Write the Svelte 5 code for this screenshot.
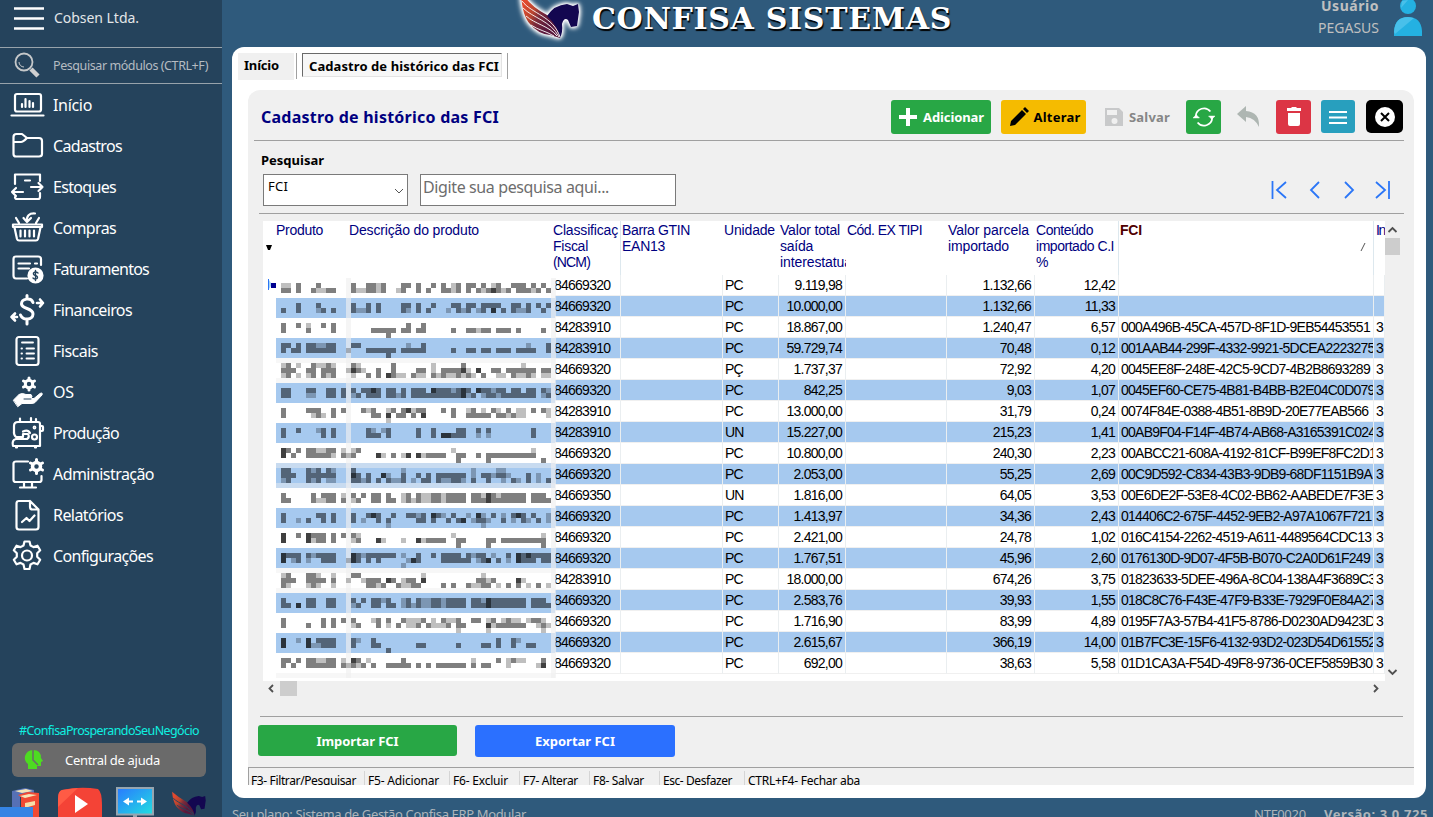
<script>
  // Tightens or widens letter-spacing so that a label fills its given width.
  function fit(node, width) {
    const n = node.textContent.length;
    const w = node.getBoundingClientRect().width;
    node.style.letterSpacing = (width - w) / n + 'px';
  }

  const menu = [
    ['Início', 39, 'home'], ['Cadastros', 69, 'folder'], ['Estoques', 63, 'stock'], ['Compras', 63, 'basket'],
    ['Faturamentos', 96, 'bill'], ['Financeiros', 79, 'money'], ['Fiscais', 45, 'doc'], ['OS', 21, 'hand'],
    ['Produção', 66, 'sew'], ['Administração', 101, 'admin'], ['Relatórios', 70, 'report'], ['Configurações', 100, 'gear']
  ];

  const heads = [
    { l: [] }, { l: [['Produto', 47]] }, { l: [['Descrição do produto', 130]] },
    { l: [['Classificaç', 65], ['Fiscal', 35], ['(NCM)', 37]] },
    { l: [['Barra GTIN', 68], ['EAN13', 43]] }, { l: [['Unidade', 51]] },
    { l: [['Valor total', 60], ['saída', 33], ['interestatual', 75]] }, { l: [['Cód. EX TIPI', 75]] },
    { l: [['Valor parcela', 81], ['importado', 61]] }, { l: [['Conteúdo', 57], ['importado C.I', 78], ['%', 11]] },
    { l: [['FCI', 22]], b: true }, { l: [['In', 9]] }
  ];

  const rows = `84669320|PC|9.119,98|1.132,66|12,42|
84669320|PC|10.000,00|1.132,66|11,33|
84283910|PC|18.867,00|1.240,47|6,57|000A496B-45CA-457D-8F1D-9EB54453551
84283910|PC|59.729,74|70,48|0,12|001AAB44-299F-4332-9921-5DCEA2223275
84669320|PÇ|1.737,37|72,92|4,20|0045EE8F-248E-42C5-9CD7-4B2B8693289
84669320|PC|842,25|9,03|1,07|0045EF60-CE75-4B81-B4BB-B2E04C0D079
84283910|PC|13.000,00|31,79|0,24|0074F84E-0388-4B51-8B9D-20E77EAB566
84283910|UN|15.227,00|215,23|1,41|00AB9F04-F14F-4B74-AB68-A3165391C024
84669320|PC|10.800,00|240,30|2,23|00ABCC21-608A-4192-81CF-B99EF8FC2D1
84669320|PC|2.053,00|55,25|2,69|00C9D592-C834-43B3-9DB9-68DF1151B9A
84669350|UN|1.816,00|64,05|3,53|00E6DE2F-53E8-4C02-BB62-AABEDE7F3E
84669320|PC|1.413,97|34,36|2,43|014406C2-675F-4452-9EB2-A97A1067F721
84669320|PC|2.421,00|24,78|1,02|016C4154-2262-4519-A611-4489564CDC13
84669320|PC|1.767,51|45,96|2,60|0176130D-9D07-4F5B-B070-C2A0D61F249
84283910|PC|18.000,00|674,26|3,75|01823633-5DEE-496A-8C04-138A4F3689C3
84669320|PC|2.583,76|39,93|1,55|018C8C76-F43E-47F9-B33E-7929F0E84A27
84669320|PC|1.716,90|83,99|4,89|0195F7A3-57B4-41F5-8786-D0230AD9423D
84669320|PC|2.615,67|366,19|14,00|01B7FC3E-15F6-4132-93D2-023D54D61552
84669320|PC|692,00|38,63|5,58|01D1CA3A-F54D-49F8-9736-0CEF5859B30`.split('\n').map((r) => r.split('|'));

  // Masked cells: y of each line, then runs of start column, shade and length on a 5px grid.
  const mask = `283 1l2 4m1 8m1 15m1 18m2 20l1 21m1 25m2 28m1 31m1 33m1 35l1 36m1 38m2 41m1 43l1 44m1 47m2 49m1 51m1 53m1
288 1m2 4m1 7m1 8l2 10m2 15m1 16l2 18m2 20l1 21m1 24l1 25m1 28m1 30m1 33m2 35l1 36m1 38m1 40m1 41l1 42m1 43d1 44m1 45l1 46m1 48m1 49m2 51l1 52m1 54m1
303 4m1 8m1 15m1 18m1 20m1 25m2 28m1 31m1 35m2 38m2 41m4 47m2 50m1 52m1 54m1
308 1m1 4m1 8l1 9m1 11m1 15m1 16l2 18m1 20m1 25m1 26l1 28m1 30m1 34l1 36m1 37l1 38m1 40l1 41m1 43d1 45m1 47m1 48l2 50m1 53m1
323 1m1 4m1 6l1 9m1 11m1 26m1 29m1
328 1m1 6m1 11m1 19m5 25m2 28m2 35m1 38m2 40l1 41m2 44m3 48m1 53m1
333 22m1
343 1m2 4m1 6m2 8l2 10m2 15m2 26l1 29m1 50l1 54m1
348 1m1 3m2 6m6 14l1 18m6 25m5 35m1 38m2 41m2 44m3 48m4 54m1
353 22m1
363 1l1 2m1 4l1 7m1 8l2 10m1 11l1 15m1 16l1 23m1 31l1 37m1 49l1
368 1m3 6m2 9m2 11m1 14l1 15d1 16m1 17l1 20m1 23m1 28m2 31l1 33m4 37d1 38l1 40d1 43m2 46m2 48m4 53m2
373 1l1 2m1 4l1 6l1 7m1 9m1 10l1 11m1 15l1 18m1 20m1 22d1 23m1 24l2 27m1 28l2 31m1 32l1 33m1 34l2 36m1 37l1 38m1 39l1 41m1 44l2 47m1 48l2 50m1 51l1 53l2
388 1m2 6m2 10m2 13m1 15m1 17m2 19d1 20m1 22m2 25m1 27m3 31d1 32m3 35l1 36m1 37d1 38m1 40d1 41m2 43l1 44m2 47m2 50m2 53m1 54l1
393 1m2 6l2 10m2 13m1 15l1 16m1 18m2 20m1 22m2 24l1 25m1 27m4 31m4 35m2 37d1 38l1 39m1 41l1 42m2 44l1 45m1 46m6 53l1 54m1
408 1m1 6m3 11m1 13m1 17m1 18l1 19m1 22l1 23m1 25m1 26d1 27l1 28m2 33m1 35m1 38l1 39m1 41l1 43m1 44l1 46m1 48l2 51m1 53m1 54l1
413 1m1 7l1 8m1 9l1 11m1 19m2 22d1 24m2 27m1 29d1 35m1 38m5 44m2 46l1 47m1 48l2 54l1
418 22l1
428 1m1 4m1 8l1 9m1 11m1 18m1 19l1 21l1 22m1 28m1 31m1 36m2 40m1 42m1 51m1
433 1m1 9m1 11m1 18m3 22m1 28m1 31m1 33d2 35m2 37m1 40l1 42l1 51m1
448 1d1 2m1 4m1 6m2 8l2 10m2 13l1 15l1 16m1 35l1 51l1
453 1d1 3m1 6m2 8m2 10m1 11l1 13m1 14l1 15m1 20d1 21l1 23m1 25l1 26d1 28d1 29l1 30m4 36m2 40m1 42m10
458 36m1 42m1 53m1
468 1m2 6m1 7l1 8m1 10m1 11l1 15m1 25l1 39l1 44l2
473 1m3 6m6 15d1 16m1 18m1 21d1 22l1 25m1 28m1 30m1 32m6 39l1 41m2 43l1 44m2 46l1 50m1 52l1
478 1l1 2m1 6m1 7l1 8m1 10l2 15m2 17l1 18m1 20m1 22m1 23l2 25m1 27l1 29m2 32m1 33l2 35m2 37l1 39m1 42m1 45l1 47m1 48l1 50m1 52l1 54m1
493 1m1 7m1 9m3 13l1 15m1 17m1 19m2 22m1 25l1 26m1 28m1 29l2 31m2 33l1 34m4 39m2 41l1 42d1 43m1 44l1 45m5 51m3
498 1m2 7m1 8l2 10m2 13m1 15l1 16m1 19m2 22m2 25l1 26m1 27l1 28m1 29l2 31m2 33l1 34m4 39m2 41m1 42d1 43m1 44m6 51m4
513 1m1 8m2 11m1 15m1 18m1 19d1 20m1 23m1 26m2 28l1 29m1 31d1 32m1 33l1 35m1 38l1 40d1 41l1 43m1 45l1 47m1 48d1 49m1 51m1 54l1
518 1m1 4l1 6m1 9m1 11m1 15m1 17l1 20m1 22m1 28m2 31m1 34m1 36m1 37d1 39l1 40m2 42l1 45m1 47l1 49m1 50l1 52m1 54l1
523 22l1 41l1
533 1d1 4m1 6d1 7m2 9m1 11m1 13m1 15m1 16l1 35l1 53l1
538 1d1 6d1 7l1 8m2 11m1 15l1 16m1 20d1 21l1 25l1 28d1 29l1 30m4 36m2 42m2 45m5 50m4
543 36m1 42m1 53m1
553 1d1 2m2 4m1 6m1 7l1 8m4 15d1 16m1 17l1 18m2 20m4 25l1 28m1 31m1 33m2 35m2 38m1 39l1 40m2 43l1 46m1 48d1 49m1 50d1 51m4
558 1d1 3l1 4m1 6l1 9m3 14l1 15d1 16m1 18m1 20m1 26l1 27d1 28m1 33m4 37m2 40l1 41m1 42d1 44m1 46l1 48d1 49m3 53m2
563 25l1
573 1l1 2m1 6m1 7m1 8l1 11l1 15m2 29l1 41l1
578 1m3 6m4 11m1 14l1 17l1 18m3 22d1 23m1 25l1 26m2 29d1 40m2 42l1 43m1 48d1 49l1
583 1m1 2l1 6l1 7m1 8l1 11l1 18m2 20l1 21m1 24m1 25l2 27m2 33m1 35m1 38m1 39l2 41m2 44l1 46m1 48m1 50l1 52m1 54l1
598 1m1 6m2 10m2 15m1 17m1 19m2 21l1 22m1 25l1 26m1 28m1 29l2 31m2 33l1 34m4 39m2 41l1 42d1 43m1 44m6 51m3
603 1m2 4d1 6m2 10m2 15l1 16m1 19m2 22m2 25l1 26m1 27l1 28m1 29l2 31m2 33l1 34m4 39m2 41m1 42d1 43m1 44m6 51m4
618 1m1 9m1 11m1 13m1 15m1 19l1 20m1 22m1 25m1 26l3 29m1 31l1 33m1 34l2 36m1 39m2 42l1 43m1 45l1 46m1 47l2 50l1 51m2 53l1
623 1m1 6m1 9m1 11m1 15l1 16m1 20m1 22l1 24m1 26l2 28m1 30m1 31l2 33l1 34m1 36m2 42d1 43l1 44m6 53m1 52l1 54l1
628 36l1 42l1 53l1
638 1d1 4l1 6d1 8m3 11m1 15m1 16l1 19m1 44m1 47m1 48l1
643 1d1 6d1 7l2 9m3 15m1 19m2 28m2 36m1 41m2 44m1 47m1 50m2
648 22m1
658 1m2 4m1 6m2 8l2 10m2 13l1 15d1 16m1 18l1 25m1 39l1 44m1 46l1 47m1 48l2 53m1
663 1m1 3m1 6m4 10m2 13m1 14l1 15m1 16l1 17m1 19m1 22m2 24m3 28m1 30m1 32m6 39m1 41m2 46l1 52l1 53d1`
    .split('\n').flatMap((line) => {
      const [y, ...runs] = line.split(' ');
      return runs.map((r) => {
        const [, s, k, n] = r.match(/(\d+)([lmd])(\d+)/);
        return { x: s * 5, y: y - 275, w: n * 5, o: { l: 0.25, m: 0.5, d: 0.75 }[k] };
      });
    });
  const stripes = [[298, 20], [338, 20], [383, 20], [423, 20], [468, 15], [508, 20], [548, 20], [593, 20], [633, 20]];
  const pale = [[358, 5, '#f7f7f7'], [378, 5, '#f7f7f7'], [463, 5, '#c8dbf0'], [483, 5, '#c8dbf0'], [568, 5, '#f7f7f7'], [588, 5, '#f7f7f7'], [673, 5, '#f7f7f7']];

  const keys = [['F3- Filtrar/Pesquisar', 105, 116], ['F5- Adicionar', 71, 85], ['F6- Excluir', 55, 70], ['F7- Alterar', 55, 70], ['F8- Salvar', 51, 70], ['Esc- Desfazer', 69, 85], ['CTRL+F4- Fechar aba', 112, 130]];
</script>

{#snippet pegasus()}
  <defs><linearGradient id="wing" x1="0" y1="0" x2="1" y2=".6"><stop offset=".15" stop-color="#e2492f" /><stop offset=".4" stop-color="#b8452f" /><stop offset=".55" stop-color="#7d2c3a" /><stop offset=".8" stop-color="#5a183c" /></linearGradient></defs>
  <path d="M1-4C2 10 5 20 10 25Q18 35 30 36L40 39Q40 25 27 16 12 8 5-2z" fill="url(#wing)" />
  <path d="M27 17Q34 6 47 5L53 7 58 5 59 13 57 27 51 28 48 21Q44 18 42 25 43 33 40 39 38 27 27 17z" fill="#130750" />
  <path d="M2 2C12 15 33 17 40 38M3 9C13 19 31 22 39 38M6 17C15 25 29 27 37 37M11 26C18 31 26 32 34 37" fill="none" stroke="#fff" stroke-width=".9" />
{/snippet}

<div class="app">
  <aside>
    <div class="company">
      <svg width="32" height="28" viewBox="0 0 32 28"><path d="M1 3.500H31M1 13.500H31M1 23.500H31" stroke="#fff" stroke-width="2.400" /></svg>
      <span use:fit={85}>Cobsen Ltda.</span>
    </div>
    <div class="find">
      <svg width="26" height="26" viewBox="0 0 26 26" fill="none"><circle cx="10" cy="10" r="8.500" stroke="#c5c8ca" stroke-width="1.800" /><path d="M5 10a5 5 0 0 0 5 5" stroke="#c5c8ca" /><path d="M17 17l7 7" stroke="#d0d0d0" stroke-width="4.500" /></svg>
      <span use:fit={155}>Pesquisar módulos (CTRL+F)</span>
    </div>
    <nav>
      {#each menu as [label, w, icon]}
        <div class="item">
          <svg class="mi" width="36" height="36" viewBox="0 0 36 36" fill="none" stroke="#fff" stroke-width="2.200" stroke-linecap="round" stroke-linejoin="round">
            {#if icon === 'home'}
              <rect x="6" y="7" width="26" height="17.500" rx="2" /><path d="M2.500 28.500H34.500" /><path d="M13 20v-3M16.500 20v-8M20.500 20v-6M24 20v-4" />
            {:else if icon === 'folder'}
              <path d="M4.500 26V9Q4.500 6 7.500 6H13L18 10H30Q33 10 33 13V26Q33 28.500 30 28.500H7Q4.500 28.500 4.500 26M4.500 14H12Q14 14 18 10" />
            {:else if icon === 'stock'}
              <path d="M6 15V5.500H31V12M31 24V28Q31 30 29 30H8Q6 30 6 28M16 11.500H21M22 18H33.500M29.500 14l4 4-4 4M14 23H3M7 19l-4 4 4 4" />
            {:else if icon === 'basket'}
              <path d="M4 14.500H33V17H4zM5.500 17.500L8 29Q8.500 30.500 10 30.500H27Q28.500 30.500 29 29L31.500 17.500M11.500 20.500v6M16 20.500v6M20.500 20.500v6M25 20.500v6M10 13L7 8M27 13l3-5M18 11C17.500 6 20 3 26 3.500M14.500 8l3.500 4 4-4" />
            {:else if icon === 'bill'}
              <path d="M18 27.500H7Q4.500 27.500 4.500 24.500V8Q4.500 5.500 7 5.500H29Q32 5.500 32 8V14M9.500 12.500H21M9.500 17.500H20M26 12.500h2" /><circle cx="26.500" cy="24.500" r="7" fill="#fff" /><path d="M29 22Q26.500 20 24.500 22 24 24 26.500 24.500 29.500 25.500 28 27.500 26 29 24 27M26.500 19.500v10" stroke="#25435c" stroke-width="1.400" />
            {:else if icon === 'money'}
              <path d="M24 10.500C22 5 12.500 6.500 12.500 12 13 17.500 24 15.500 24 22 24 28 14 29 11.500 23M18 3.500V7M18 28v4" stroke-width="3" /><path d="M28 11H34M31 7.500l3 3.500-3 3.500M8 25H2.500M6 21.500l-3.500 3.500 3.500 3.500" stroke-width="2.600" />
            {:else if icon === 'doc'}
              <rect x="7.500" y="4" width="22" height="28" rx="2.500" /><path d="M13 9.500H24M17.500 15.500H25M17.500 20.500H25M17.500 25.500H25M12.500 15.500h.5M12.500 20.500h.5M12.500 25.500h.5" stroke-width="1.900" />
            {:else if icon === 'hand'}
              <circle cx="20" cy="10" r="3.700" stroke-width="3" /><path d="M20 4v2M20 14v2M14.500 7l2 1M23.500 12l2 1M14.500 13l2-1M23.500 8l2-1" stroke-width="3" /><path d="M4.500 26L10 20.500Q13 18.500 17 20.500H22Q24 22 22 24.500H25L31 19.500Q34 18 33 21L26 28.500Q25 29.500 22 29.500H13L9 32.500z" fill="#fff" stroke-width="1" /><path d="M15 25H22" stroke="#25435c" stroke-width="1" />
            {:else if icon === 'sew'}
              <path d="M5 16V11Q5 7 9 7H29Q31 7 31 9V31H4Q2.500 25 7 24H18Q21 22 19 19H14V22H7Q4.500 20 5 16M31 11h2q1 0 1 1v3q0 1-1 1h-2M11 6V3.500M22 6V3M27 6V4M14 16.500Q19 14 21 18M7 32.500h1M26 32.500h1" /><circle cx="25.500" cy="12.500" r=".8" /><circle cx="25.500" cy="22" r="2.500" />
            {:else if icon === 'admin'}
              <path d="M19 5.500H7Q4.500 5.500 4.500 7.500V24Q4.500 26 7 26H30Q32.500 26 32.500 24V20M15 26.500v4.500M23 26.500v4.500M11 31.500H27" /><g transform="translate(27.500 10.500)"><circle r="4" stroke-width="3.500" /><path d="M0-7v2M0 5v2M-6-3.500l2 1M4 2.500l2 1M-6 3.500l2-1M4-2.500l2-1" stroke-width="3" /></g>
            {:else if icon === 'report'}
              <path d="M21 4H10Q7.500 4 7.500 6.500V30Q7.500 32.500 10 32.500H27Q29.500 32.500 29.500 30V12.500L21 4V10Q21 12.500 23.500 12.500H29M13 25l4.500-4 3 3 5-5.500" />
            {:else}
              <path d="M15.500 3.500h5l1 4 3 1.600 4-1.400 2.700 4.500-3 3v3.600l3 3-2.700 4.500-4-1.400-3 1.600-1 4.500h-5l-1-4.500-3-1.600-4 1.400-2.700-4.500 3-3v-3.600l-3-3 2.700-4.500 4 1.400 3-1.600z" /><circle cx="18" cy="17.500" r="5" />
            {/if}
          </svg>
          <span use:fit={w}>{label}</span>
        </div>
      {/each}
    </nav>
    <div class="tag"><span use:fit={180}>#ConfisaProsperandoSeuNegócio</span></div>
    <div class="help">
      <svg width="20" height="22" viewBox="0 0 20 22"><path d="M4 20V15Q0 12 1 7 3 1 9 1 17 1 17 9L19 12 17 13V17H13V20z" fill="#4ddb21" /><path d="M9 1V11L14 16" fill="none" stroke="#6a6a6a" stroke-width="1.500" /></svg>
      <span use:fit={95}>Central de ajuda</span>
    </div>
    <div class="dock">
      <svg width="222" height="30" viewBox="0 0 222 30">
        <path d="M12 4L25 1 34 3V10H20V26H12z" fill="#5670b5" /><path d="M15 4L26 2 33 4 22 6z" fill="#f5e6b8" />
        <path d="M18 8L28 5 39 6V30H21V10z" fill="#f04a33" /><path d="M20 9L29 7 37 8 25 11z" fill="#f5e6b8" /><path d="M25 16L35 14V18L28 20V22H25z" fill="#f5dfa8" />
        <rect y="20" width="33" height="10" fill="#3584e4" />
        <path d="M62 3Q80-1 98 2 102 5 102 18V30H58V12Q58 4 62 3z" fill="#f44336" /><path d="M62 3L78 1 58 20V12Q58 4 62 3z" fill="#ff5b45" /><path d="M75 8L88 17 75 26z" fill="#fff" />
        <defs><linearGradient id="scr" x2="1" y2="1"><stop stop-color="#2979ff" /><stop offset="1" stop-color="#22e0e0" /></linearGradient></defs>
        <rect x="117" y="1" width="36" height="26.500" fill="url(#scr)" stroke="#96a5b0" stroke-width="2" /><rect x="133" y="28" width="4" height="3" fill="#96a5b0" />
        <path d="M123 14.500l6-4v3h4v2h-4v3zM147 14.500l-6-4v3h-4v2h4v3z" fill="#fff" />
        <g transform="translate(171.500 6) scale(.58)">
          <path d="M1-2C2 10 5 20 10 25Q18 35 30 36L40 39Q40 25 27 16 12 8 1-2z" fill="url(#wing)" />
          <path d="M27 17Q34 6 47 5L53 7 58 5 59 13 57 27 51 28 48 21Q44 18 42 25 43 33 40 39 38 27 27 17z" fill="#130750" />
          <path d="M3 9C13 19 31 22 39 38M9 21C18 28 30 29 37 37" fill="none" stroke="#25435c" stroke-width="1.600" />
        </g>
      </svg>
    </div>
  </aside>

  <main>
    <header>
      <div class="brand">
        <svg width="76" height="46" viewBox="0 0 76 46"><g class="glow" transform="translate(5 -1)">{@render pegasus()}</g></svg>
        <span use:fit={360}>CONFISA SISTEMAS</span>
      </div>
      <div class="user"><b use:fit={58}>Usuário</b><span use:fit={61}>PEGASUS</span></div>
      <svg class="avatar" width="30" height="38" viewBox="0 0 30 38" fill="#24b1e2"><circle cx="15" cy="6" r="8" /><path d="M1 36V31Q2 17 15 17 28 17 29 31V36z" /><path d="M1 32Q2 17 15 17L21 18 2 34z" fill="#48c0ea" /><path d="M9 1L15 0 8 8z" fill="#48c0ea" /></svg>
    </header>

    <section class="window">
      <div class="tabs">
        <div class="tab"><b use:fit={35}>Início</b></div><i></i>
        <div class="tab on"><b use:fit={190}>Cadastro de histórico das FCI</b></div><i></i>
      </div>
      <div class="panel">
        <div class="bar">
          <h1><span use:fit={238}>Cadastro de histórico das FCI</span></h1>
          <div class="btn add"><svg width="20" height="20"><path d="M10 1V19M1 10H19" stroke="#fff" stroke-width="4" /></svg><b use:fit={61}>Adicionar</b></div>
          <div class="btn edit"><svg width="20" height="20"><path d="M1 19L2 14 13 3 17 7 6 18zM14 2L16 0 20 4 18 6z" /></svg><b use:fit={47}>Alterar</b></div>
          <div class="btn save"><svg width="20" height="20"><path d="M1 1H15L19 5V19H1zM3 3V8H13V3zM13.500 14A3 3 0 1 0 7.500 14 3 3 0 1 0 13.500 14z" fill="#c8c9ca" fill-rule="evenodd" /></svg><b use:fit={41}>Salvar</b></div>
          <div class="btn green"><svg width="22" height="22" viewBox="0 0 24 24" fill="none" stroke="#fff" stroke-width="1.900"><path d="M3 11A9 9 0 0 1 19 6M21 13A9 9 0 0 1 5 18" /><path d="M0 13L3.500 9.500 7 13zM17 11H24L20.500 14.500z" fill="#fff" stroke-width=".6" /></svg></div>
          <div class="btn undo"><svg width="26" height="24"><path d="M2 9L11 1V6Q25 7 24 22 20 13 11 12V17z" fill="#aeb6b2" /></svg></div>
          <div class="btn red"><svg width="16" height="20" fill="#fff"><path d="M1 1H5L6 0H10L11 1H15V4H1zM2 6H14V17Q14 19 12 19H4Q2 19 2 17z" /></svg></div>
          <div class="btn teal"><svg width="20" height="16"><path d="M1 3H19M1 8.500H19M1 14H19" stroke="#fff" stroke-width="2" /></svg></div>
          <div class="btn black"><svg width="20" height="20"><circle cx="10" cy="10" r="10" fill="#fff" /><path d="M6 6l8 8M14 6l-8 8" stroke="#000" stroke-width="2" /></svg></div>
        </div>
        <div class="search">
          <div class="fields">
            <b use:fit={63}>Pesquisar</b>
            <div class="inputs">
              <div class="select"><span use:fit={20}>FCI</span><svg width="10" height="8"><path d="M1 2L5 6 9 2" fill="none" stroke="#555" /></svg></div>
              <div class="input"><span use:fit={186}>Digite sua pesquisa aqui...</span></div>
            </div>
          </div>
          <svg class="pager" width="122" height="22" fill="none" stroke="#2b76f7" stroke-width="1.800"><path d="M2.500 2V20M16 3L7 11 16 19M49 3L41 11 49 19M75 3L83 11 75 19M106 3L115 11 106 19M119 2V20" /></svg>
        </div>

        <div class="gridwrap">
          <div class="table">
            <div class="tr head">
              {#each heads as h, i}
                <div class="th" class:bold={h.b}>
                  {#each h.l as [t, w]}<div><span use:fit={w}>{t}</span></div>{/each}
                  {#if i === 0}<svg class="down" width="7" height="6"><path d="M0 0H6L4 5H2z" /></svg>{/if}
                  {#if h.b}<svg class="asc" width="6" height="8"><path d="M1 8L5 0" stroke="#555" /></svg>{/if}
                </div>
              {/each}
            </div>
            {#each rows as r, i}
              <div class="tr" class:blue={i % 2}>
                <div class="lead">{#if i === 0}<svg width="8" height="12"><path d="M.5 0V11" stroke="#2b76f7" stroke-width="1" /><path d="M1 1L4 5.500 1 10" fill="#a6d5f5" /><rect x="3" y="4" width="5" height="5" fill="#000090" /></svg>{/if}</div>
                <div></div><div></div>
                <div>{r[0]}</div><div></div><div>{r[1]}</div><div class="n">{r[2]}</div><div></div>
                <div class="n">{r[3]}</div><div class="n">{r[4]}</div><div>{r[5]}</div><div>{i > 1 ? '3' : ''}</div>
              </div>
            {/each}
            <svg class="mask" width="280" height="404" shape-rendering="crispEdges">
              <rect width="279" height="404" fill="#fff" />
              {#each stripes as [y, h]}<rect y={y - 275} width="279" height={h} fill="#a6c9ef" />{/each}
              {#each pale as [y, h, c]}<rect y={y - 275} width="279" height={h} fill={c} />{/each}
              <rect x="70" y="3" width="5" height="400" fill="#efefef" opacity=".65" />
              <rect x="275" y="3" width="5" height="400" fill="#efefef" opacity=".65" />
              {#each mask as m}<rect x={m.x} y={m.y} width={m.w} height="5" opacity={m.o} />{/each}
            </svg>
          </div>
          <div class="vs"><svg width="15" height="17"><path d="M3.500 11L7.500 7 11.500 11" /></svg><div></div><svg width="15" height="17"><path d="M3.500 6L7.500 10 11.500 6" /></svg></div>
          <div class="hs"><svg width="17" height="15"><path d="M10 4L6.500 7.500 10 11" /></svg><div></div><svg width="17" height="15"><path d="M6 4L9.500 7.500 6 11" /></svg></div>
        </div>

        <div class="actions"><div class="big imp"><b use:fit={82}>Importar FCI</b></div><div class="big exp"><b use:fit={80}>Exportar FCI</b></div></div>
        <div class="status">{#each keys as [t, w, box]}<div style="width:{box}px"><span use:fit={w}>{t}</span></div>{/each}</div>
      </div>
    </section>
    <footer><span use:fit={294}>Seu plano: Sistema de Gestão Confisa ERP Modular</span><span class="code" use:fit={52}>NTF0020</span><b use:fit={104}>Versão: 3.0.725</b></footer>
  </main>
</div>

<style>
  :global(body) { margin: 0; overflow: hidden; }
  .app { display: flex; width: 1433px; height: 817px; overflow: hidden; background: #2f5a7c; font-family: "Noto Sans", "Open Sans", sans-serif; font-size: 13px; white-space: nowrap; }
  .app * { box-sizing: border-box; }
  svg { display: block; flex: none; }
  span, b { display: inline-block; white-space: nowrap; }
  b, h1 { font-weight: bold; font-size: 13px; }
  aside { width: 222px; height: 817px; flex: none; background: #25435c; display: flex; flex-direction: column; color: #fff; }
  .company { height: 48px; border-bottom: 1px solid #98a3ab; display: flex; align-items: flex-start; padding: 5px 0 0 13px; gap: 9px; font-size: 14px; color: #e3e6e8; }
  .company span { line-height: 26px; }
  .find { height: 36px; border-bottom: 1px solid #98a3ab; display: flex; align-items: center; padding: 0 0 1px 14px; gap: 13px; font-size: 12.500px; color: #b5bcc2; }
  nav { padding-top: 0; }
  .item { height: 41px; display: flex; align-items: center; padding-left: 9px; gap: 8px; font-size: 16px; }
  .item span { line-height: 40px; }
  .tag { margin-top: auto; padding-left: 19px; color: #0ff0e0; font-size: 12.500px; line-height: 18px; height: 21px; }
  .help { width: 194px; height: 34px; margin-left: 12px; border-radius: 6px; background: #6a6a6a; display: flex; align-items: center; padding-left: 12px; gap: 21px; }
  .dock { height: 30px; margin-top: 10px; }
  main { flex: 1; display: flex; flex-direction: column; min-width: 0; }
  header { height: 47px; display: flex; overflow: hidden; }
  .brand { display: flex; margin-left: 293px; color: #fff; width: 789px; font: bold 30px/37px "DejaVu Serif", serif; text-shadow: 1px 2px 1px #000; gap: 1px; }
  .glow { filter: drop-shadow(0 0 1px #fff) drop-shadow(0 0 2px #fff) drop-shadow(0 0 2px #fff); }
  .user { width: 75px; color: #c0c0c0; line-height: 22px; font-size: 14px; display: flex; flex-direction: column; align-items: flex-end; margin-top: -5px; }
  .user b { font-size: 14px; }
  .avatar { margin-left: 14px; }
  .window { margin-left: 10px; width: 1194px; height: 751px; background: #fff; border-radius: 12px; padding: 6px 12px 13px 6px; }
  .tabs { display: flex; height: 37px; }
  .tab { height: 27px; width: 56px; background: #f0f0f0; padding-left: 6px; line-height: 25px; }
  .tabs i { width: 1px; height: 26px; background: #a0a0a0; margin: 0 5px 0 2px; }
  .tab.on { width: 200px; height: 24px; background: #f7f7f7; border: 1px solid #696969; border-right-color: #e3e3e3; border-bottom-color: #e3e3e3; line-height: 24px; padding-left: 6px; margin-right: 3px; }
  .panel { margin-left: 10px; width: 1166px; height: 695px; background: #f0f0f0; border-radius: 12px 12px 0 0; display: flex; flex-direction: column; overflow: hidden; }
  .bar { height: 51px; margin: 0 10px 0 6px; border-bottom: 1px solid #a0a0a0; display: flex; padding: 10px 1px 0 7px; }
  h1 { margin: 0; width: 630px; font-size: 16px; line-height: 34px; color: #000080; }
  .btn { height: 34px; border-radius: 3px; display: flex; align-items: center; justify-content: center; gap: 5px; }
  .add { width: 100px; background: #28a745; color: #fff; }
  .edit { width: 85px; margin-left: 10px; background: #f5bb00; padding-left: 2px; }
  .save { width: 82px; margin-left: 10px; color: #868686; }
  .green { width: 35px; margin-left: 8px; background: #28a745; }
  .undo { width: 35px; margin-left: 9px; }
  .red { width: 35px; margin-left: 11px; background: #dc3545; }
  .teal { width: 34px; height: 33px; margin-left: 10px; background: #289fbe; }
  .black { width: 37px; height: 33px; margin-left: 11px; background: #000; border-radius: 5px; }
  .search { height: 73px; margin: 0 10px 0 11px; border-bottom: 1px solid #a0a0a0; display: flex; justify-content: space-between; padding: 11px 12px 0 2px; }
  .fields { line-height: 16px; }
  .fields > b { display: block; height: 17px; line-height: 17px; width: max-content; }
  .inputs { display: flex; gap: 12px; margin: 5px 0 0 2px; }
  .select, .input { height: 32px; border: 1px solid #7a7a7a; background: #fff; display: flex; }
  .select { width: 145px; justify-content: space-between; padding: 3px 3px 0 4px; }
  .select svg { margin-top: 9px; }
  .input { width: 256px; padding: 0 2px; font-size: 16px; line-height: 25px; color: #6d6d6d; }
  .pager { margin-top: 27px; }
  .gridwrap { display: grid; grid-template: 460px 15px / 1122px 15px; padding: 7px 0 0 15px; height: 502px; }
  .table { position: relative; background: #fff; overflow: hidden; font-family: "Liberation Sans", Arial, sans-serif; font-size: 14px; }
  .tr { display: grid; grid-template-columns: 13px 71px 205px 69px 102px 56px 67px 101px 88px 84px 255px 11px; height: 21px; }
  .tr > div { overflow: hidden; border-right: 1px solid #eaeef0; border-bottom: 1px solid #f0f0f0; padding-left: 2px; line-height: 20px; letter-spacing: -.76px; }
  .tr > div:first-child { border: 0; background: #fff; }
  .blue > div { background: #a6c9ef; }
  .tr > .n { text-align: right; padding-right: 3px; }
  .tr > .lead { padding: 4px 0 0 5px; }
  .head { height: 54px; color: #000080; }
  .tr > .th { border: 0; padding: 1px 1px 0; line-height: 16px; position: relative; letter-spacing: 0; }
  .tr > .th:nth-child(2) { padding-left: 0; }
  .tr > .th:nth-child(3) { padding-left: 2px; }
  .tr > .th:nth-child(12) { padding-left: 2px; }
  .tr > .th:nth-child(4), .tr > .th:nth-child(10), .tr > .th:nth-child(11) { border-right: 1px solid #dde8ee; }
  .tr > .bold { color: #500000; font-weight: bold; }
  .down { position: absolute; left: 3px; top: 24px; }
  .asc { position: absolute; right: 7px; top: 22px; }
  .mask { position: absolute; left: 13px; top: 54px; }
  .vs path, .hs path { fill: none; stroke: #505050; stroke-width: 1.800; }
  .vs div { width: 15px; height: 17px; background: #cdcdcd; }
  .vs { display: flex; flex-direction: column; }
  .vs svg:last-child { margin-top: auto; }
  .hs { display: flex; }
  .hs div { width: 17px; height: 15px; background: #cdcdcd; }
  .hs svg:last-child { margin-left: auto; }
  .actions { margin: 0 11px 0 12px; border-top: 1px solid #a0a0a0; height: 51px; padding-top: 8px; display: flex; gap: 18px; }
  .big { border-radius: 3px; width: 199px; height: 31px; margin-left: -2px; text-align: center; line-height: 32px; color: #fff; background: #28a745; }
  .exp { margin: 0; width: 200px; height: 32px; background: #2b70ff; }
  .status { display: flex; border-top: 1px solid #a0a0a0; border-left: 1px solid #a0a0a0; height: 18px; overflow: hidden; font-size: 12px; line-height: 20px; padding-top: 3px; }
  .status div { border-right: 1px solid #d5d5d5; padding-left: 3px; }
  .status div:first-child { padding-left: 2px; }
  .status div:last-child { border: 0; }
  footer { display: flex; color: #adb5ba; padding: 7px 5px 0 10px; line-height: 18px; height: 19px; overflow: hidden; }
  footer .code { margin-left: auto; margin-right: 18px; }
</style>
